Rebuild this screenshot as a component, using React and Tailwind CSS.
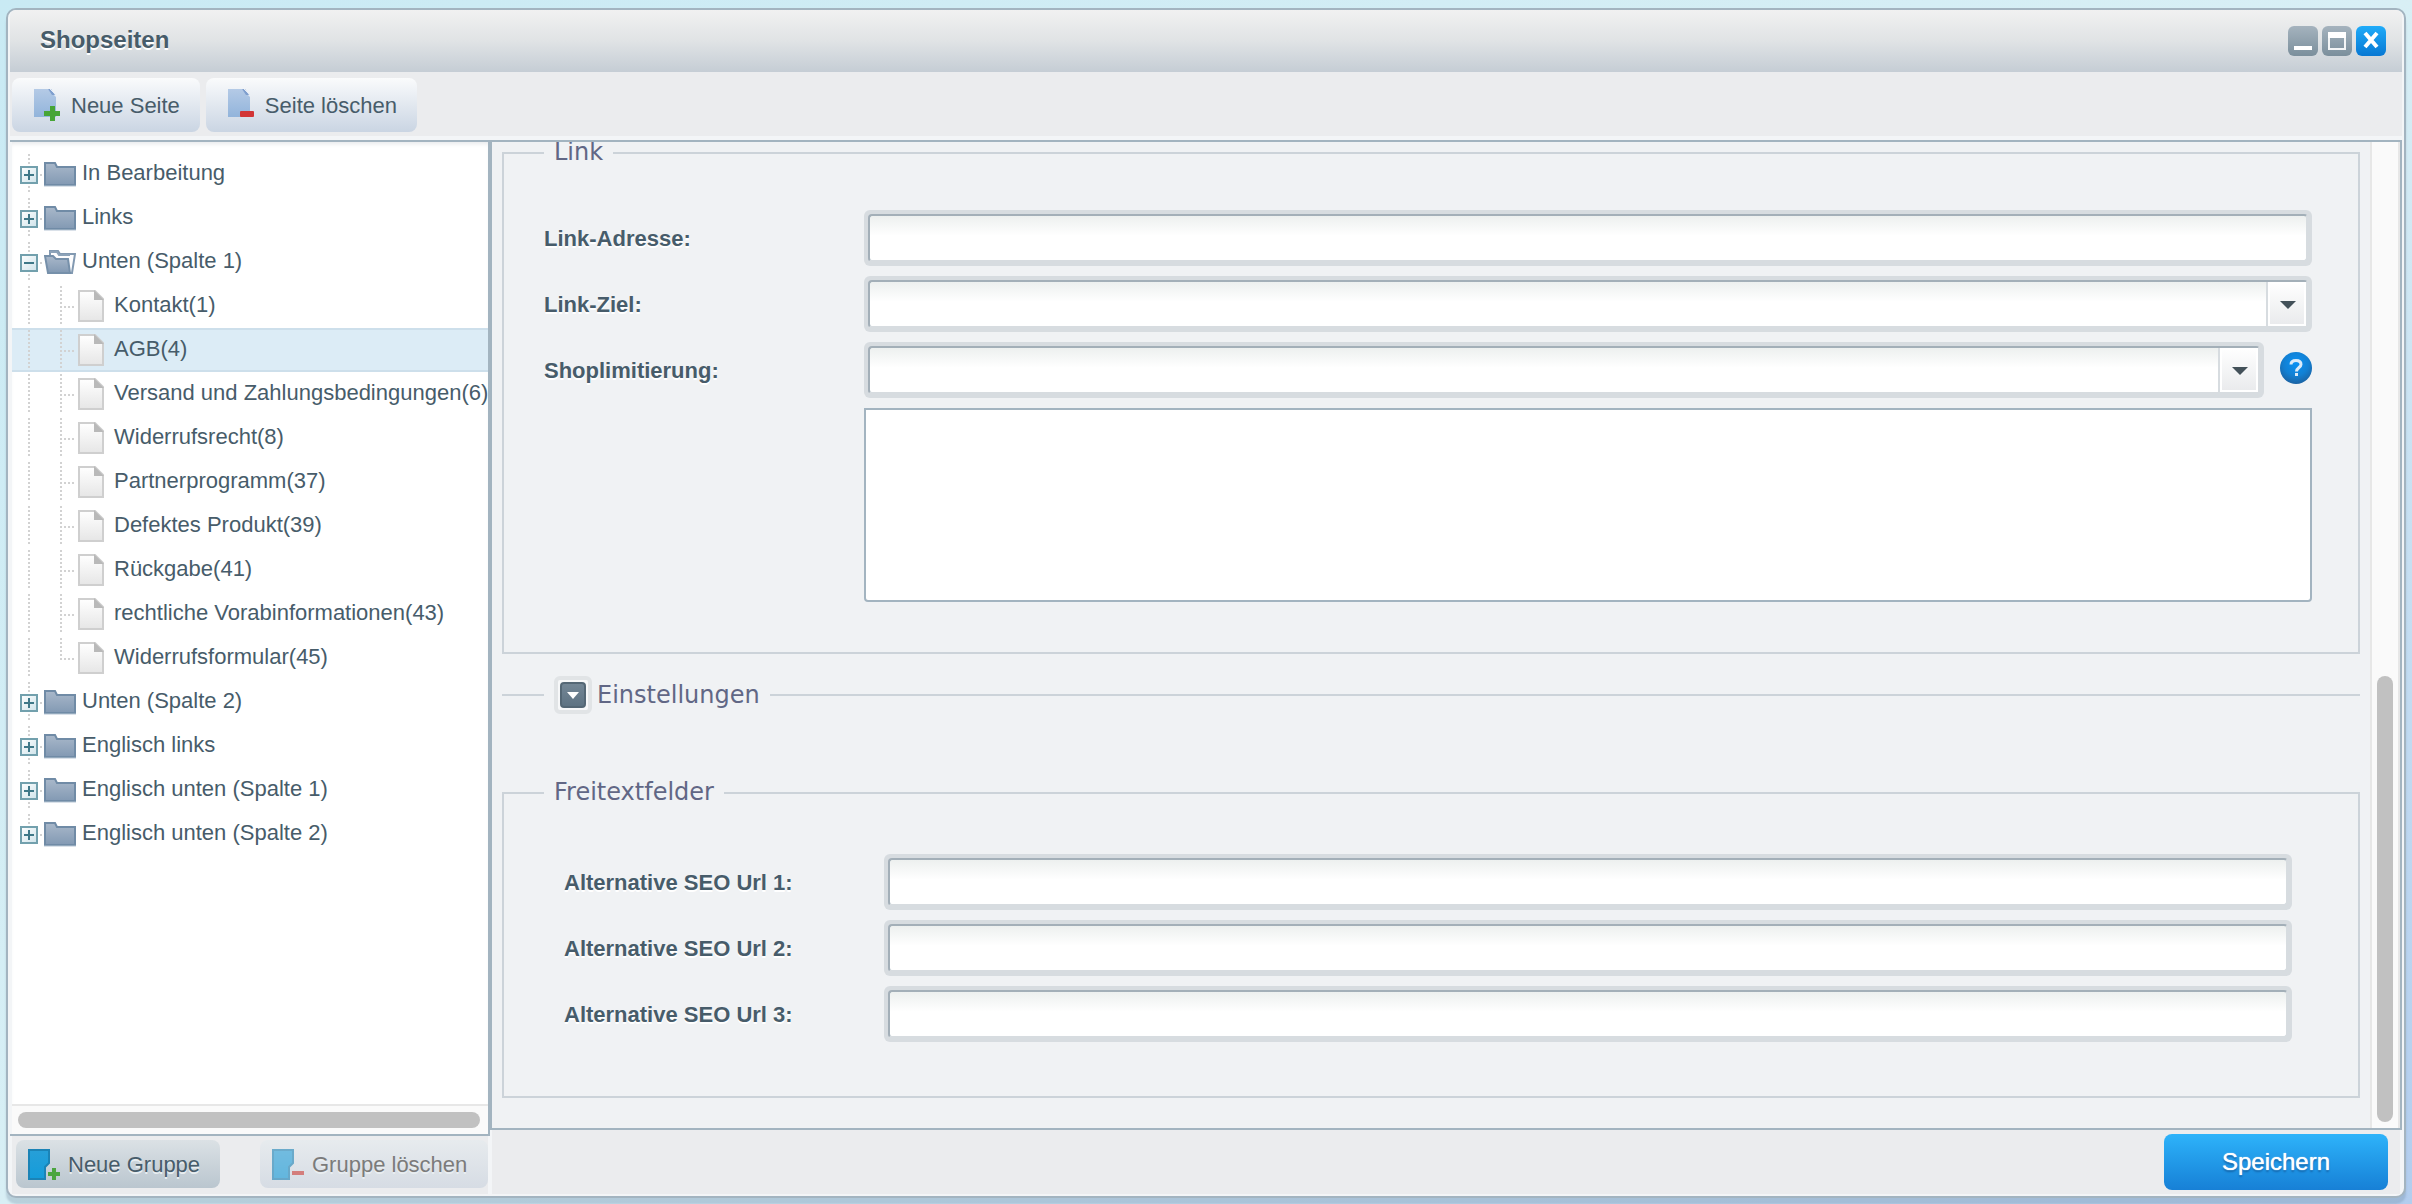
import React, { useState } from 'react';

const treeData = [
  { id: 'edit', text: 'In Bearbeitung' },
  { id: 'links', text: 'Links' },
  {
    id: 'bottom1',
    text: 'Unten (Spalte 1)',
    children: [
      { id: 1, text: 'Kontakt(1)' },
      { id: 4, text: 'AGB(4)' },
      { id: 6, text: 'Versand und Zahlungsbedingungen(6)' },
      { id: 8, text: 'Widerrufsrecht(8)' },
      { id: 37, text: 'Partnerprogramm(37)' },
      { id: 39, text: 'Defektes Produkt(39)' },
      { id: 41, text: 'Rückgabe(41)' },
      { id: 43, text: 'rechtliche Vorabinformationen(43)' },
      { id: 45, text: 'Widerrufsformular(45)' }
    ]
  },
  { id: 'bottom2', text: 'Unten (Spalte 2)' },
  { id: 'enLeft', text: 'Englisch links' },
  { id: 'enBottom1', text: 'Englisch unten (Spalte 1)' },
  { id: 'enBottom2', text: 'Englisch unten (Spalte 2)' }
];

const FIELD =
  'block w-full h-12 rounded border-2 border-t-[#a3afb8] border-l-[#a3afb8] border-r-[#d7dce0] border-b-[#d7dce0] bg-linear-to-b from-[#edf0ef] to-white to-45% px-3 text-[22px] text-[#475c6a] outline-none';
const FRAME = 'rounded-md bg-[#d7dce0] p-1';

/* ---------- Tree icons ---------- */

const Elbow = ({ last }) => (
  <svg width="32" height="40" className="shrink-0" aria-hidden="true">
    <path d={last ? 'M17 0V22' : 'M17 0V38'} stroke="#d2d2d2" strokeWidth="2" strokeDasharray="2 2" />
    <path d="M20 21H32" stroke="#d2d2d2" strokeWidth="2" strokeDasharray="2 2" />
  </svg>
);

const Line = () => (
  <svg width="32" height="40" className="shrink-0" aria-hidden="true">
    <path d="M17 0V38" stroke="#d2d2d2" strokeWidth="2" strokeDasharray="2 2" />
  </svg>
);

const Expander = ({ open, last }) => (
  <svg width="32" height="40" aria-hidden="true">
    <defs>
      <linearGradient id="expander" x1="0" y1="0" x2="1" y2="1">
        <stop offset="0" stopColor="#ffffff" />
        <stop offset="1" stopColor="#cfe3ea" />
      </linearGradient>
    </defs>
    <path d={last ? 'M17 0V12' : 'M17 0V38'} stroke="#d2d2d2" strokeWidth="2" strokeDasharray="2 2" />
    <path d="M28 21H30" stroke="#d2d2d2" strokeWidth="2" />
    <rect x="9" y="13" width="16" height="16" fill="url(#expander)" stroke="#72a0ad" strokeWidth="2" />
    <path d="M12 21H22" stroke="#3f7888" strokeWidth="2" />
    {!open && <path d="M17 16V26" stroke="#3f7888" strokeWidth="2" />}
  </svg>
);

const FolderIcon = () => (
  <svg width="32" height="40" className="shrink-0" aria-hidden="true">
    <defs>
      <linearGradient id="folder" x1="0" y1="0" x2="0" y2="1">
        <stop offset="0" stopColor="#a9b8ca" />
        <stop offset="1" stopColor="#8299b3" />
      </linearGradient>
    </defs>
    <path d="M1 9H11L13 13H31V31H1Z" fill="url(#folder)" stroke="#708ba6" strokeWidth="2" />
    <path d="M0 32H32" stroke="#b5c4d3" />
  </svg>
);

const FolderOpenIcon = () => (
  <svg width="32" height="40" className="shrink-0" aria-hidden="true">
    <path d="M6 13V9H14L16 12H31L28 31H24Z" fill="#fdfdfe" stroke="#8299b1" strokeWidth="2" />
    <path d="M6 10H13L15 13H26" fill="none" stroke="#8da3b9" strokeWidth="2" />
    <path d="M1 14H9L12 17H24L26 31H4Z" fill="url(#folder)" stroke="#7690aa" strokeWidth="2" />
  </svg>
);

const FileIcon = () => (
  <svg width="32" height="40" className="shrink-0" aria-hidden="true">
    <defs>
      <linearGradient id="file" x1="0" y1="0" x2="0" y2="1">
        <stop offset="0" stopColor="#ffffff" />
        <stop offset="1" stopColor="#e6e6e6" />
      </linearGradient>
    </defs>
    <path d="M3 5H19L27 13V35H3Z" fill="url(#file)" stroke="#cfcfcf" strokeWidth="2" />
    <path d="M18 4L28 14H18Z" fill="#b9b9b9" />
  </svg>
);

/* ---------- Button icons ---------- */

const PageIcon = ({ remove }) => (
  <svg width="32" height="36" aria-hidden="true">
    <defs>
      <linearGradient id="page" x1="0" y1="0" x2="0" y2="1">
        <stop offset="0" stopColor="#b4cae6" />
        <stop offset="1" stopColor="#92b4db" />
      </linearGradient>
    </defs>
    <path d="M2 1H16L24 9V29H2Z" fill="url(#page)" />
    <path d="M16 1H19L23 7H20Z" fill="#7f9fce" />
    <path d="M18 1L24 7" stroke="#e3ebf6" strokeWidth="1" />
    {remove ? (
      <rect x="14" y="23" width="14" height="6" rx="1" fill="#d23536" />
    ) : (
      <path d="M18 18H23V23H28V28H23V33H18V28H12V23H18Z" fill="#47a536" />
    )}
  </svg>
);

const GroupIcon = ({ remove }) => (
  <svg width="32" height="32" aria-hidden="true" className={remove ? 'opacity-60' : ''}>
    <defs>
      <linearGradient id="group" x1="0" y1="0" x2="0" y2="1">
        <stop offset="0" stopColor="#279fd8" />
        <stop offset="1" stopColor="#149cda" />
      </linearGradient>
    </defs>
    <path d="M1 1H21V14L17 18V30H1Z" fill="url(#group)" stroke="#1b83b6" strokeWidth="2" />
    {remove ? (
      <rect x="20" y="22" width="12" height="4" fill="#cf3d36" />
    ) : (
      <path d="M24 19H28V23H32V27H28V31H24V27H20V23H24Z" fill="#4ba53f" />
    )}
  </svg>
);

const WindowButton = ({ label, active, children }) => (
  <button
    type="button"
    aria-label={label}
    className={`h-[30px] w-[30px] rounded-md bg-linear-to-b ${
      active ? 'from-[#1fabf9] to-[#0878d3]' : 'from-[#a5b3be] to-[#7b8f9c]'
    }`}
  >
    <svg width="30" height="30" aria-hidden="true">{children}</svg>
  </button>
);

/* ---------- Tree ---------- */

const Row = ({ text, selected, onClick, children }) => (
  <div
    onClick={onClick}
    className={`flex h-11 cursor-pointer items-start border-y-2 whitespace-nowrap ${
      selected ? 'border-[#cddfeb] bg-[#dcecf6]' : 'border-transparent'
    }`}
  >
    {children}
    <span className="pl-1.5 leading-[38px]">{text}</span>
  </div>
);

const Tree = () => {
  const [open, setOpen] = useState({ bottom1: true });
  const [selected, setSelected] = useState(4);

  return (
    <div className="flex-1 overflow-hidden bg-white pt-[10px] shadow-[inset_0_4px_4px_-2px_#e8eaec]">
      {treeData.map((group, i) => (
        <div key={group.id}>
          <Row text={group.text}>
            <button
              type="button"
              aria-label={group.text}
              className="shrink-0"
              onClick={() => setOpen({ ...open, [group.id]: !open[group.id] })}
            >
              <Expander open={open[group.id]} last={i === treeData.length - 1} />
            </button>
            {open[group.id] ? <FolderOpenIcon /> : <FolderIcon />}
          </Row>
          {open[group.id] && group.children?.map((page, n) => (
            <Row
              key={page.id}
              text={page.text}
              selected={selected === page.id}
              onClick={() => setSelected(page.id)}
            >
              <Line />
              <Elbow last={n === group.children.length - 1} />
              <FileIcon />
            </Row>
          ))}
        </div>
      ))}
    </div>
  );
};

/* ---------- Form ---------- */

const Label = ({ htmlFor, children }) => (
  <label htmlFor={htmlFor} className="w-80 shrink-0 pt-0.5 font-bold [text-shadow:0_2px_0_#fff]">
    {children}
  </label>
);

const TextField = ({ id, label }) => (
  <div className="flex items-center">
    <Label htmlFor={id}>{label}</Label>
    <div className={`flex-1 ${FRAME}`}>
      <input id={id} type="text" className={FIELD} />
    </div>
  </div>
);

const ComboField = ({ id, label, help }) => (
  <div className="flex items-center">
    <Label htmlFor={id}>{label}</Label>
    <div className={`relative flex-1 ${FRAME}`}>
      <select id={id} className={`${FIELD} appearance-none`}>
        <option value=""></option>
      </select>
      <span className="pointer-events-none absolute top-1.5 right-1.5 bottom-1.5 flex w-10 items-center justify-center border-l-2 border-[#d7dce0] bg-linear-to-b from-white to-[#e9eaec] pt-0.5 pl-0.5 shadow-[inset_0_0_0_2px_#fff]">
        <svg width="16" height="8" aria-hidden="true">
          <path d="M0 0H16L8 8Z" fill="#435159" />
        </svg>
      </span>
    </div>
    {help && (
      <button type="button" aria-label="Hilfe" className="mb-1 ml-4 h-8 w-8">
        <svg width="32" height="32" aria-hidden="true">
          <defs>
            <radialGradient id="help" cx="0.5" cy="0.35" r="0.65">
              <stop offset="0" stopColor="#0a92f4" />
              <stop offset="0.6" stopColor="#1280d3" />
              <stop offset="1" stopColor="#1b63a3" />
            </radialGradient>
          </defs>
          <circle cx="16" cy="16" r="16" fill="url(#help)" />
          <path
            d="M11 12.5C11 9.5 13 8.5 16 8.5C19 8.5 21 10 21 12.5C21 15.5 16.5 15.5 16.5 19.5"
            fill="none"
            stroke="#dcebf8"
            strokeWidth="3"
          />
          <rect x="15" y="21" width="3" height="3" fill="#dcebf8" />
        </svg>
      </button>
    )}
  </div>
);

const Legend = ({ children }) => (
  <legend className="px-[10px] pb-0.5 font-['DejaVu_Sans',sans-serif] text-2xl leading-7 text-[#616785]">
    {children}
  </legend>
);

const PageForm = () => (
  <form id="page-form" className="shrink-0 px-[10px] pb-[30px]">
    <fieldset className="border-2 border-[#ccd3d9] pt-[42px] pr-[46px] pb-[50px] pl-10">
      <Legend>Link</Legend>
      <div className="flex flex-col gap-[10px]">
        <TextField id="link" label="Link-Adresse:" />
        <ComboField id="target" label="Link-Ziel:" />
        <ComboField id="shops" label="Shoplimitierung:" help />
        <textarea
          aria-label="Shops"
          className="ml-80 h-[194px] resize-none rounded-b border-2 border-[#a3b4c0] bg-white outline-none"
        />
      </div>
    </fieldset>

    <fieldset className="mt-[22px] border-t-2 border-[#ccd3d9] pl-[42px]">
      <legend className="flex items-center px-[10px] font-['DejaVu_Sans',sans-serif] text-2xl text-[#616785]">
        <button
          type="button"
          aria-label="Einstellungen ausklappen"
          className="mr-[5px] flex h-[38px] w-[38px] items-center justify-center rounded-md border-4 border-[#e1e4e6] bg-[#f7f8f9]"
        >
          <svg width="26" height="26" aria-hidden="true">
            <defs>
              <linearGradient id="toggle" x1="0" y1="0" x2="0" y2="1">
                <stop offset="0" stopColor="#748796" />
                <stop offset="1" stopColor="#5d7282" />
              </linearGradient>
            </defs>
            <rect x="1" y="1" width="24" height="24" rx="3" fill="url(#toggle)" stroke="#546775" strokeWidth="2" />
            <path d="M7 10H19L13 17Z" fill="#fff" />
          </svg>
        </button>
        Einstellungen
      </legend>
    </fieldset>

    <fieldset className="mt-16 border-2 border-[#ccd3d9] pt-[46px] pr-[46px] pb-[54px] pl-10">
      <Legend>Freitextfelder</Legend>
      <div className="flex flex-col gap-[10px] px-5">
        <TextField id="attr1" label="Alternative SEO Url 1:" />
        <TextField id="attr2" label="Alternative SEO Url 2:" />
        <TextField id="attr3" label="Alternative SEO Url 3:" />
      </div>
    </fieldset>
  </form>
);

const TOOLBAR_BUTTON =
  'flex h-[54px] items-center gap-[7px] rounded-lg bg-linear-to-b from-[#fafbfc] to-[#cad5e3] pt-0.5 px-5';
const GROUP_BUTTON = 'flex h-12 items-center gap-2 rounded-lg bg-linear-to-b pt-0.5 pl-3 [text-shadow:0_2px_0_#e9eef1]';

const App = () => (
  <div className="h-screen bg-linear-to-br from-[#c9eaf4] via-[#d8eff5] to-[#b2cdee] px-1.5 pt-2 pb-1.5 font-['Liberation_Sans',Arial,sans-serif] text-[22px] leading-7 text-[#475c6a]">
    <div className="flex h-full flex-col rounded-[10px] border-2 border-[#a3b4c0] bg-[#f3f5f7] px-0.5 pb-0.5 shadow-[0_6px_2px_rgba(110,135,160,0.3)]">
      {/* Title bar */}
      <header className="flex h-[62px] shrink-0 items-center rounded-t-md bg-linear-to-b from-[#f1f1f1] via-[#e0e3e5] to-[#c5cdd5] pr-4 pl-[30px]">
        <h1 className="flex-1 pb-0.5 text-2xl font-bold [text-shadow:0_2px_0_#fff]">Shopseiten</h1>
        <div className="flex gap-1">
          <WindowButton label="Minimieren">
            <rect x="6" y="20" width="18" height="4" fill="#fff" />
          </WindowButton>
          <WindowButton label="Maximieren">
            <rect x="7" y="7" width="16" height="16" fill="none" stroke="#f4f6f7" strokeWidth="2" />
            <rect x="6" y="6" width="18" height="6" fill="#fff" />
          </WindowButton>
          <WindowButton label="Schließen" active>
            <path d="M9 7L21 21M21 7L9 21" stroke="#fff" strokeWidth="4" />
          </WindowButton>
        </div>
      </header>

      {/* Toolbar */}
      <div className="flex h-16 shrink-0 gap-1.5 bg-[#ebecee] pt-1.5 pl-0.5">
        <button type="button" className={TOOLBAR_BUTTON}>
          <PageIcon />
          Neue Seite
        </button>
        <button type="button" className={TOOLBAR_BUTTON}>
          <PageIcon remove />
          Seite löschen
        </button>
      </div>

      <div className="flex min-h-0 flex-1 pt-1">
        {/* Page tree */}
        <aside className="flex w-[480px] shrink-0 flex-col">
          <div className="flex min-h-0 flex-1 flex-col border-t-2 border-r-2 border-b-2 border-[#a3b4c0] pl-0.5">
            <Tree />
            <div className="border-t-2 border-[#e7e7e7] bg-[#fafafa] py-1.5 pr-2 pl-1.5">
              <div className="h-4 rounded-full bg-[#c1c1c1]" />
            </div>
          </div>
          <div className="mr-0.5 ml-0.5 flex justify-between bg-[#ebecee] pt-1 pb-1.5 pl-1">
            <button type="button" className={`${GROUP_BUTTON} w-[204px] from-[#dbe1e5] to-[#bac6cf]`}>
              <GroupIcon />
              Neue Gruppe
            </button>
            <button type="button" disabled className={`${GROUP_BUTTON} w-[228px] from-[#e7ebee] to-[#d6dce4] text-[#7b7b7b]`}>
              <GroupIcon remove />
              Gruppe löschen
            </button>
          </div>
        </aside>

        {/* Detail form */}
        <main className="flex min-w-0 flex-1 flex-col">
          <div className="flex min-h-0 flex-1 border-2 border-[#a3b4c0] bg-[#f0f2f4]">
            <div className="flex min-w-0 flex-1 flex-col justify-end overflow-hidden">
              <PageForm />
            </div>
            <div className="flex w-[30px] flex-col justify-end border-x-2 border-[#e7e7e7] bg-[#fafafa] px-[5px] pb-1.5">
              <div className="h-[45.5%] rounded-full bg-[#c1c1c1]" />
            </div>
          </div>
          <div className="mr-0.5 ml-0.5 flex justify-end bg-[#ebecee] pt-1 pr-3 pb-1">
            <button
              type="submit"
              form="page-form"
              className="h-14 w-56 rounded-lg bg-linear-to-b from-[#2eb3fa] to-[#1780d6] text-2xl font-medium text-white [text-shadow:0_0_1px_#fff,0_2px_2px_#1263a8]"
            >
              Speichern
            </button>
          </div>
        </main>
      </div>
    </div>
  </div>
);

export default App;
